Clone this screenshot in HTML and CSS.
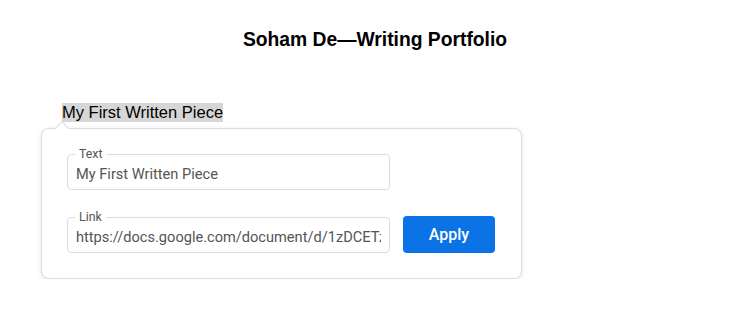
FILE: index.html
```html
<!DOCTYPE html>
<html lang="en">
<head>
<meta charset="utf-8">
<title>Soham De—Writing Portfolio</title>
<link rel="stylesheet" href="styles.css">
</head>
<body>
<h1 class="title">Soham De—Writing Portfolio</h1>
<section class="editor">
  <span class="selected">My First Written Piece</span>
  <div class="card">
    <span class="arrow"></span>
    <div class="row">
      <fieldset class="field">
        <legend class="field-label">Text</legend>
        <input class="field-input" type="text" value="My First Written Piece">
      </fieldset>
    </div>
    <div class="row">
      <fieldset class="field">
        <legend class="field-label">Link</legend>
        <input class="field-input" type="text" value="https://docs.google.com/document/d/1zDCETzQx9kLm3/edit">
      </fieldset>
      <button class="apply" type="button">Apply</button>
    </div>
  </div>
</section>
</body>
</html>
```

FILE: styles.css
```css
html, body {
  margin: 0;
  padding: 0;
  background: #ffffff;
}

body {
  font-family: "Liberation Sans", Arial, sans-serif;
  color: #000;
}

.title {
  margin: 29px 0 0;
  text-align: center;
  font-size: 19.3px;
  font-weight: bold;
  line-height: 22px;
}

.editor {
  padding-left: 41px;
  margin-top: 52px;
}

.selected {
  display: inline-block;
  margin-left: 21px;
  background: #d6d6d6;
  font-size: 16.5px;
  line-height: 19px;
  height: 19px;
}

.card {
  position: relative;
  box-sizing: border-box;
  width: 481px;
  margin-top: 6px;
  padding: 18px 25px 25px;
  background: #ffffff;
  border: 1px solid #dadce0;
  border-radius: 8px;
  box-shadow: 0 1px 4px rgba(0, 0, 0, 0.12);
  display: flex;
  flex-direction: column;
  gap: 20px;
}

.arrow {
  position: absolute;
  left: 15px;
  top: -6px;
  width: 10px;
  height: 10px;
  background: #ffffff;
  border-top: 1px solid #dadce0;
  border-left: 1px solid #dadce0;
  transform: rotate(45deg);
  box-sizing: border-box;
}

.row {
  display: flex;
  align-items: flex-end;
  gap: 13px;
}

.field {
  box-sizing: border-box;
  width: 323px;
  min-width: 0;
  margin: 0;
  padding: 0 8px;
  border: 1px solid #dadce0;
  border-radius: 4px;
}

.field-label {
  margin-left: -1px;
  padding: 0 4px;
  font-family: Roboto, "Liberation Sans", sans-serif;
  font-size: 12.4px;
  line-height: 14px;
  color: #555;
}

.field-input {
  display: block;
  box-sizing: border-box;
  width: 100%;
  height: 28px;
  margin: 0;
  padding: 0 0 3px;
  border: none;
  outline: none;
  background: transparent;
  font-family: Roboto, "Liberation Sans", sans-serif;
  font-size: 14.6px;
  color: #555;
}

.apply {
  box-sizing: border-box;
  width: 92px;
  height: 37px;
  margin: 0;
  border: none;
  border-radius: 4px;
  background: #0b73e6;
  color: #ffffff;
  font-family: Roboto, "Liberation Sans", sans-serif;
  font-size: 16px;
  font-weight: 500;
  cursor: pointer;
}
```
